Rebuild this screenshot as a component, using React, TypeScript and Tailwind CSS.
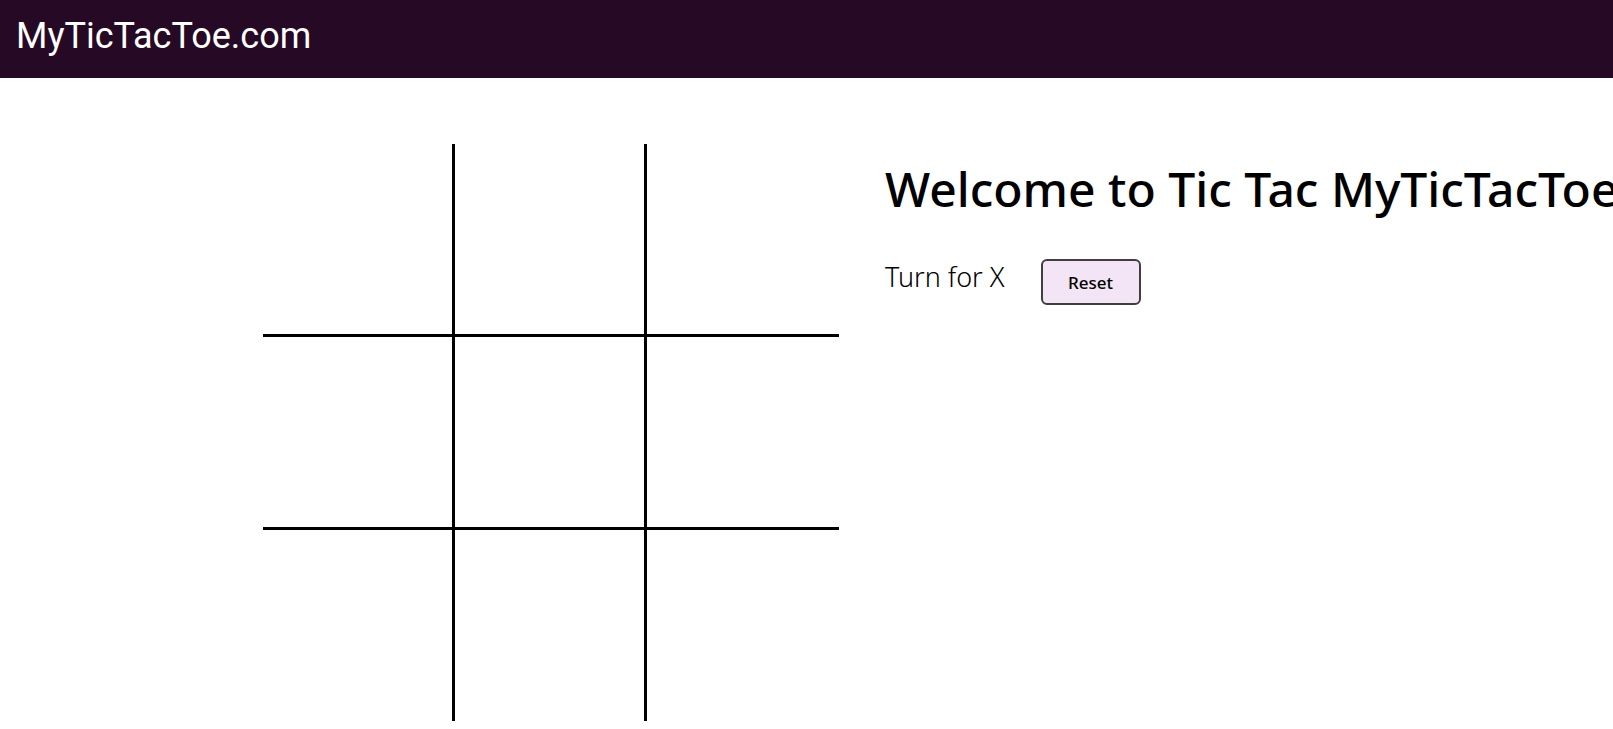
import { useState } from 'react';

type Cell = 'X' | 'O' | null;

// which cells get a right / bottom line
const borderClasses = [
  'border-r-[3px] border-b-[3px]',
  'border-r-[3px] border-b-[3px]',
  'border-b-[3px]',
  'border-r-[3px] border-b-[3px]',
  'border-r-[3px] border-b-[3px]',
  'border-b-[3px]',
  'border-r-[3px]',
  'border-r-[3px]',
  '',
];

function Board({ cells, onPlay }: { cells: Cell[]; onPlay: (i: number) => void }) {
  return (
    <div className="grid grid-cols-[repeat(3,192px)] grid-rows-[193px_193px_191px] shrink-0">
      {cells.map((c, i) => (
        <button
          key={i}
          onClick={() => onPlay(i)}
          className={`box-border border-black bg-white flex items-center justify-center text-8xl font-['Noto_Sans',sans-serif] ${borderClasses[i]}`}
        >
          {c}
        </button>
      ))}
    </div>
  );
}

export default function App() {
  const [cells, setCells] = useState<Cell[]>(Array(9).fill(null));
  const [turn, setTurn] = useState<'X' | 'O'>('X');

  const play = (i: number) => {
    if (cells[i]) return;
    const next = cells.slice();
    next[i] = turn;
    setCells(next);
    setTurn(turn === 'X' ? 'O' : 'X');
  };

  const reset = () => {
    setCells(Array(9).fill(null));
    setTurn('X');
  };

  return (
    <div className="w-screen h-screen overflow-hidden bg-white">
      <header className="h-[78px] bg-[#260a25] pl-4 pt-[18px]">
        <h1 className="text-white text-[36px] leading-none font-['Roboto',sans-serif]">MyTicTacToe.com</h1>
      </header>
      <main className="flex pl-[263px] pt-[66px] gap-[46px]">
        <Board cells={cells} onPlay={play} />
        <div className="flex flex-col font-['Noto_Sans',sans-serif] text-black">
          <h2 className="mt-[21px] text-[48px] leading-none font-medium whitespace-nowrap">
            Welcome to Tic Tac MyTicTacToe
          </h2>
          <div className="flex items-start mt-[46px]">
            <p className="mt-1 text-[27px] leading-none font-light whitespace-nowrap">Turn for {turn}</p>
            <button
              onClick={reset}
              className="ml-9 w-[100px] h-[46px] border-2 border-[#3f3f3f] rounded-md bg-[#f3e5f5] text-[17px] font-medium leading-none"
            >
              Reset
            </button>
          </div>
        </div>
      </main>
    </div>
  );
}
